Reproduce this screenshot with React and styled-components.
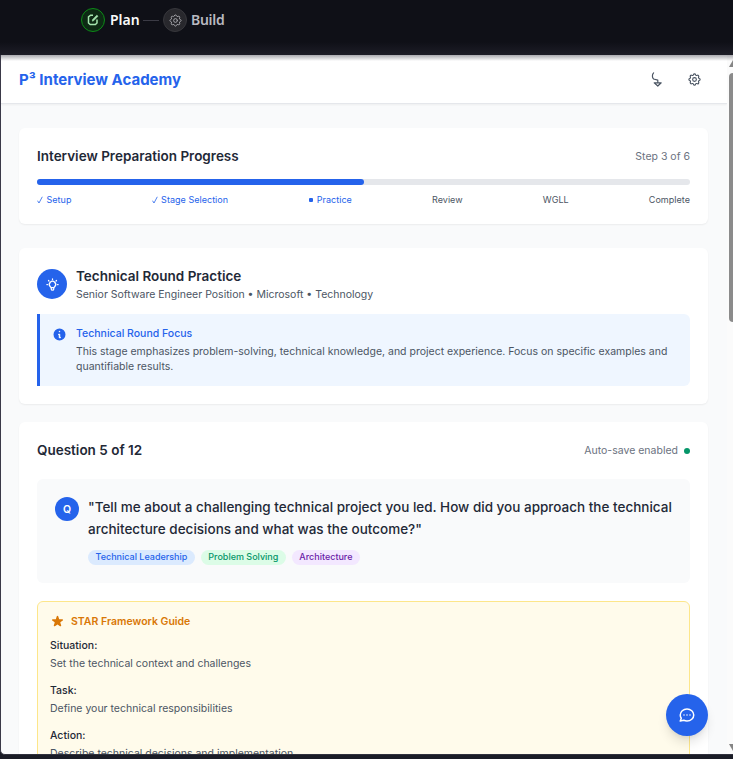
import React from "react";
import styled, { createGlobalStyle, css } from "styled-components";
import {
  HiOutlineCog,
  HiOutlineLightBulb,
  HiInformationCircle,
  HiStar,
  HiOutlineChat,
} from "react-icons/hi";

const GlobalStyle = createGlobalStyle`
  * { box-sizing: border-box; }
  body { margin: 0; background: #1a1b26; overflow: hidden; }
  h1, h2, h3, p { margin: 0; }
`;

const Shell = styled.div`
  display: flex;
  flex-direction: column;
  width: 733px;
  height: 759px;
  overflow: hidden;
  background: #1a1c26;
  font-family: Inter, sans-serif;
  color: #1f2937;
`;

const ModeBar = styled.nav`
  display: flex;
  flex: none;
  align-items: flex-start;
  height: 55px;
  padding: 8px 0 0 81px;
  background: linear-gradient(#0f1017 0, #0f1017 42px, #1d1d27 55px);
`;

const ModeBadge = styled.span`
  display: flex;
  align-items: center;
  justify-content: center;
  width: 24px;
  height: 24px;
  border-radius: 50%;
  border: 1px solid ${(p) => (p.$active ? "#0c8a17" : "#37373c")};
  background: ${(p) => (p.$active ? "#0d2a14" : "#28282d")};
  color: ${(p) => (p.$active ? "#a5e5ae" : "#a3a3a8")};
`;

const ModeLabel = styled.span`
  width: ${(p) => p.$width}px;
  margin-left: ${(p) => (p.$active ? 5 : 4)}px;
  font: 600 14px/24px "Noto Sans", sans-serif;
  letter-spacing: ${(p) => (p.$active ? 0 : -0.3)}px;
  white-space: nowrap;
  color: ${(p) => (p.$active ? "#fafafa" : "#b9b9c0")};
`;

const ModeLink = styled.span`
  width: 16px;
  height: 1px;
  margin: 12px 4px 0 4px;
  background: #3b3b45;
`;

const Frame = styled.div`
  position: relative;
  display: flex;
  height: 700px;
  border-left: 1px solid #3a3948;
  border-bottom: 1px solid #30313d;
  border-bottom-left-radius: 5px;
  background: #f9fafb;
  overflow: hidden;
  &::before {
    content: "";
    position: absolute;
    z-index: 2;
    inset: 0 0 auto 0;
    height: 6px;
    background: linear-gradient(rgba(20, 20, 35, 0.36), rgba(20, 20, 35, 0));
  }
`;

const Page = styled.div`
  display: flex;
  flex-direction: column;
  width: 726px;
  flex: none;
`;

const Header = styled.header`
  display: flex;
  flex: none;
  align-items: center;
  justify-content: space-between;
  height: 49px;
  padding: 1px 25px 0 18px;
  border-bottom: 1px solid #e5e7eb;
  background: #fff;
  box-shadow: 0 1px 2px rgba(0, 0, 0, 0.05);
`;

const Brand = styled.h1`
  font-size: 15px;
  line-height: 21px;
  font-weight: 700;
  color: #2563eb;
`;

const HeaderActions = styled.div`
  display: flex;
  align-items: center;
  gap: 23px;
  color: #4b5563;
  svg { display: block; }
`;

const Main = styled.main`
  display: flex;
  flex-direction: column;
  padding: 24px 19px 0 18px;
`;

const Card = styled.section`
  flex: none;
  padding: 18px;
  margin-bottom: ${(p) => p.$gap || 0}px;
  border-radius: 6px;
  background: #fff;
  box-shadow: 0 1px 2px rgba(0, 0, 0, 0.06);
`;

const CardHead = styled.div`
  display: flex;
  align-items: center;
  justify-content: space-between;
  margin-bottom: ${(p) => p.$gap}px;
`;

const Heading = styled.h2`
  font-size: 13.5px;
  line-height: 21px;
  font-weight: 600;
  color: #1f2937;
`;

const Small = styled.p`
  font-size: 10.5px;
  line-height: 15px;
  font-weight: ${(p) => p.$weight || 400};
  color: ${(p) => p.$color || "#4b5563"};
`;

const Track = styled.div`
  height: 6px;
  border-radius: 3px;
  background: #e5e7eb;
`;

const Fill = styled.div`
  width: 50%;
  height: 6px;
  border-radius: 3px;
  background: #2563eb;
`;

const Steps = styled.div`
  display: flex;
  justify-content: space-between;
  margin-top: 9px;
`;

const Step = styled.span`
  display: flex;
  align-items: center;
  gap: 3.5px;
  font-size: 9px;
  line-height: 12px;
  letter-spacing: 0.03px;
  color: ${(p) => (p.$on ? "#2563eb" : "#4b5563")};
`;

const StepDot = styled.i`
  width: 4px;
  height: 4px;
  margin-left: 1px;
  border-radius: 1px;
  background: #2563eb;
`;

const Stage = styled.div`
  display: flex;
  align-items: center;
  gap: 9px;
  margin-bottom: 12px;
`;

const Disc = styled.span`
  display: flex;
  flex: none;
  align-items: center;
  justify-content: center;
  width: ${(p) => p.$size}px;
  height: ${(p) => p.$size}px;
  border-radius: 50%;
  background: #2563eb;
  color: #fff;
  font-size: 10.5px;
  font-weight: 600;
`;

const Callout = styled.div`
  display: flex;
  gap: 9px;
  padding: 12px;
  border-left: 3px solid #2563eb;
  border-radius: 0 6px 6px 0;
  background: #eff6ff;
  svg { flex: none; margin-top: 0.5px; color: #2563eb; }
`;

const Lines = styled.div`
  display: flex;
  flex-direction: column;
  gap: 3px;
`;

const SaveState = styled.div`
  display: flex;
  align-items: center;
  gap: 6px;
`;

const SaveDot = styled.i`
  width: 6px;
  height: 6px;
  margin-top: 1px;
  border-radius: 50%;
  background: #059669;
`;

const Question = styled.div`
  display: flex;
  gap: 9px;
  height: 104px;
  padding: 18px 0 0 18px;
  margin-bottom: 18px;
  border-radius: 6px;
  background: #f9fafb;
`;

const QuestionText = styled.p`
  font-size: 13.5px;
  line-height: 21.94px;
  font-weight: 500;
  margin-bottom: 9px;
  white-space: nowrap;
`;

const tones = {
  blue: css`background: #dbeafe; color: #2563eb;`,
  green: css`background: #dcfce7; color: #059669;`,
  purple: css`background: #f3e8ff; color: #6b21a8;`,
};

const Tags = styled.div`
  display: flex;
  gap: 6px;
`;

const Tag = styled.span`
  padding: 1.5px 7.5px;
  border-radius: 8px;
  font-size: 9px;
  line-height: 12px;
  font-weight: 500;
  ${(p) => tones[p.$tone]}
`;

const Guide = styled.div`
  padding: 12px;
  height: 240px;
  border: 1px solid #fde68a;
  border-radius: 6px;
  background: #fffbeb;
`;

const GuideTitle = styled.div`
  display: flex;
  align-items: center;
  gap: 6px;
  margin-bottom: 9px;
  color: #d97706;
`;

const GuideItem = styled(Lines)`
  margin-bottom: 12px;
`;

const ScrollRail = styled.div`
  display: flex;
  flex-direction: column;
  flex: none;
  width: 6px;
  height: 700px;
  padding: 4px 0 3px 1px;
  background: #fbfbfb;
  svg { display: block; flex: none; }
`;

const Thumb = styled.div`
  width: 8px;
  height: 249px;
  margin: 5px 0 auto 1px;
  border-radius: 4px 0 0 4px;
  background: #8b8b8b;
`;

const ChatButton = styled.button`
  position: absolute;
  right: 25px;
  bottom: 18px;
  display: flex;
  align-items: center;
  justify-content: center;
  width: 42px;
  height: 42px;
  padding: 0;
  border: 0;
  border-radius: 50%;
  background: #2563eb;
  color: #fff;
  box-shadow: 0 8px 12px -2px rgba(0, 0, 0, 0.12), 0 3px 5px -2px rgba(0, 0, 0, 0.08);
`;

const EditIcon = () => (
  <svg width="12" height="12" viewBox="0 0 12 12" fill="none" stroke="currentColor" strokeWidth="1.5">
    <path d="M6 1.2H3.6L1.5 2.8V9L3.2 10.6H8.4L10 9V5.6" />
    <path d="M5.4 7.2V5.8L9.8 1.2L11 2.2L6.8 6.6Z" fill="currentColor" strokeWidth=".6" />
  </svg>
);

const HookArrow = () => (
  <svg width="15" height="15" viewBox="0 0 15 15" fill="none" stroke="currentColor" strokeWidth="1.2" strokeLinecap="round" strokeLinejoin="round">
    <path d="M4.6.8C3 2.4 3 5.5 4.6 7L8.8 8.2V10.6" />
    <path d="M5.2 10.8H12.2L8.8 14Z" />
  </svg>
);

const Check = () => (
  <svg width="6" height="8" viewBox="0 0 6 8" fill="none" stroke="currentColor" strokeWidth=".8">
    <path d="M.5 4.7L2 7L5.3.8" />
  </svg>
);

const guide = [
  ["Situation:", "Set the technical context and challenges"],
  ["Task:", "Define your technical responsibilities"],
  ["Action:", "Describe technical decisions and implementation"],
];

export default function App() {
  return (
    <Shell>
      <GlobalStyle />
      <ModeBar>
        <ModeBadge $active><EditIcon /></ModeBadge>
        <ModeLabel $active $width={29}>Plan</ModeLabel>
        <ModeLink />
        <ModeBadge><HiOutlineCog size={15} strokeWidth={1.6} /></ModeBadge>
        <ModeLabel $width={34}>Build</ModeLabel>
      </ModeBar>
      <Frame>
        <Page>
          <Header>
            <Brand>P³ Interview Academy</Brand>
            <HeaderActions>
              <HookArrow />
              <HiOutlineCog size={15} strokeWidth={1.8} />
            </HeaderActions>
          </Header>
          <Main>
            <Card $gap={24}>
              <CardHead $gap={12}>
                <Heading>Interview Preparation Progress</Heading>
                <Small $color="#6b7280">Step 3 of 6</Small>
              </CardHead>
              <Track><Fill /></Track>
              <Steps>
                <Step $on><Check />Setup</Step>
                <Step $on><Check />Stage Selection</Step>
                <Step $on><StepDot />Practice</Step>
                <Step>Review</Step>
                <Step>WGLL</Step>
                <Step>Complete</Step>
              </Steps>
            </Card>
            <Card $gap={18}>
              <Stage>
                <Disc $size={30}><HiOutlineLightBulb size={15} /></Disc>
                <div>
                  <Heading>Technical Round Practice</Heading>
                  <Small>Senior Software Engineer Position • Microsoft • Technology</Small>
                </div>
              </Stage>
              <Callout>
                <HiInformationCircle size={15} />
                <Lines>
                  <Small $weight={500} $color="#2563eb">Technical Round Focus</Small>
                  <Small>
                    This stage emphasizes problem-solving, technical knowledge, and project experience. Focus on specific examples and quantifiable results.
                  </Small>
                </Lines>
              </Callout>
            </Card>
            <Card>
              <CardHead $gap={18}>
                <Heading>Question 5 of 12</Heading>
                <SaveState>
                  <Small $color="#6b7280">Auto-save enabled</Small>
                  <SaveDot />
                </SaveState>
              </CardHead>
              <Question>
                <Disc $size={24}>Q</Disc>
                <div>
                  <QuestionText>
                    "Tell me about a challenging technical project you led. How did you approach the technical<br />
                    architecture decisions and what was the outcome?"
                  </QuestionText>
                  <Tags>
                    <Tag $tone="blue">Technical Leadership</Tag>
                    <Tag $tone="green">Problem Solving</Tag>
                    <Tag $tone="purple">Architecture</Tag>
                  </Tags>
                </div>
              </Question>
              <Guide>
                <GuideTitle>
                  <HiStar size={15} />
                  <Small $weight={600} $color="#d97706">STAR Framework Guide</Small>
                </GuideTitle>
                {guide.map(([name, text]) => (
                  <GuideItem key={name}>
                    <Small $weight={500} $color="#1f2937">{name}</Small>
                    <Small>{text}</Small>
                  </GuideItem>
                ))}
              </Guide>
            </Card>
          </Main>
        </Page>
        <ScrollRail>
          <svg width="10" height="9" viewBox="0 0 10 9"><path d="M1 8L5 1L9 8Z" fill="#858585" /></svg>
          <Thumb />
          <svg width="10" height="9" viewBox="0 0 10 9"><path d="M1 1L5 8L9 1Z" fill="#858585" /></svg>
        </ScrollRail>
        <ChatButton aria-label="Chat"><HiOutlineChat size={18} /></ChatButton>
      </Frame>
    </Shell>
  );
}
